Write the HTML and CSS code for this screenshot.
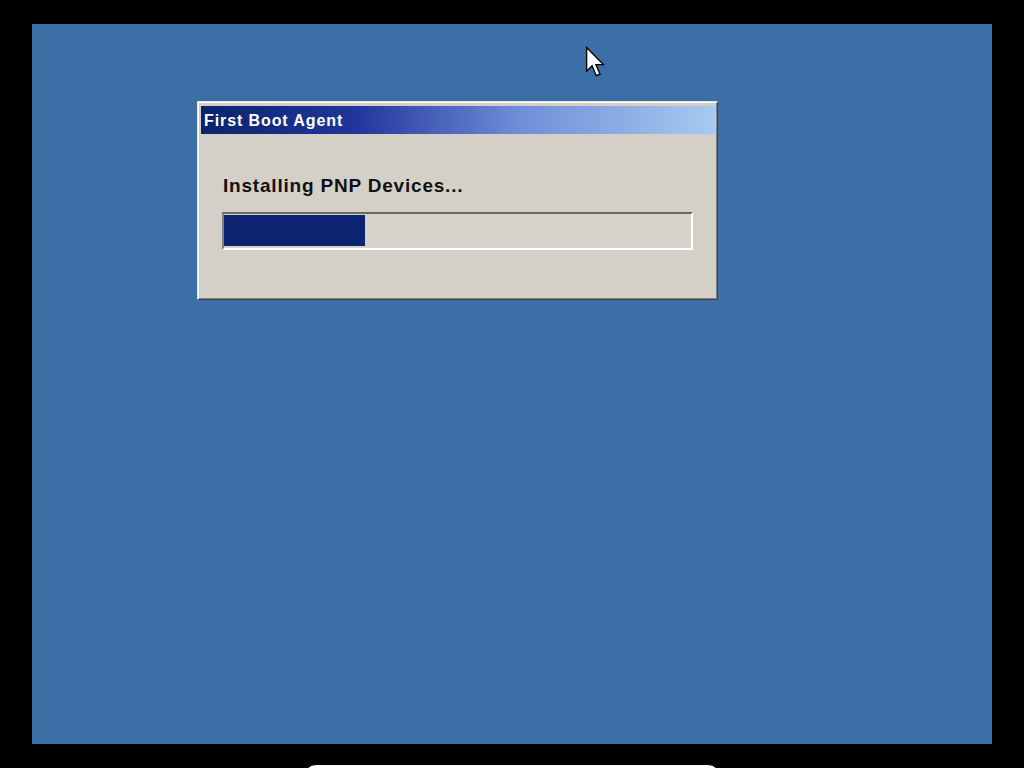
FILE: index.html
```html
<!DOCTYPE html>
<html lang="en">
<head>
  <meta charset="UTF-8">
  <title>First Boot Agent</title>
  <link rel="stylesheet" href="styles.css">
</head>
<body>
  <div class="screen">
    <div class="dialog">
      <div class="title-bar">First Boot Agent</div>
      <div class="dialog-body">
        <p class="status">Installing PNP Devices...</p>
        <div class="progress">
          <div class="progress-fill" style="width: 30.2%"></div>
        </div>
      </div>
    </div>

    <svg class="cursor" width="20" height="32" viewBox="0 0 13 21">
      <path d="M1 1 L1 16.5 L4.6 13 L7.3 19.5 L9.8 18.4 L7.1 12.2 L12 12.2 Z" fill="#fff" stroke="#000" stroke-width="0.9" stroke-linejoin="miter"/>
    </svg>
  </div>
  <div class="monitor-tab"></div>
</body>
</html>
```

FILE: styles.css
```css
/* General */
body {
  margin: 0;
  background-color: #000;
  font-family: 'Liberation Sans', Arial, sans-serif;
  overflow: hidden;
  height: 768px;
}

.screen {
  position: relative;
  width: 960px;
  height: 720px;
  margin: 24px 0 0 32px;
  background-color: #3d6fa7;
  overflow: hidden;
}

/* Dialog window */
.dialog {
  width: 521px;
  height: 199px;
  margin-left: 165px;
  position: relative;
  top: 77px;
  box-sizing: border-box;
  padding: 4px 2px 4px 3px;
  background-color: #d4d0c8;
  border-top: 1px solid #e8e6e0;
  border-left: 1px solid #e8e6e0;
  border-right: 1px solid #404040;
  border-bottom: 1px solid #404040;
  box-shadow: inset 1px 1px 0 #fff, inset -1px -1px 0 #808080;
}

.title-bar {
  height: 28px;
  line-height: 29px;
  padding-left: 3px;
  color: #fff;
  font-weight: bold;
  font-size: 16px;
  letter-spacing: 0.9px;
  background: linear-gradient(to right, #0a246a 0%, #22359c 30%, #6f8ed8 62%, #a6caf0 100%);
}

.dialog-body {
  padding: 0 21px;
}

.status {
  margin: 41px 0 0 1px;
  font-size: 19px;
  font-weight: bold;
  letter-spacing: 0.8px;
  color: #111;
  line-height: 22px;
}

.progress {
  margin-top: 15px;
  width: 471px;
  height: 38px;
  box-sizing: border-box;
  background-color: #d6d3cc;
  border-top: 2px solid #6a6864;
  border-left: 2px solid #808080;
  border-right: 2px solid #fff;
  border-bottom: 2px solid #fff;
}

.progress-fill {
  height: 31px;
  margin-top: 1px;
  background-color: #0c2472;
}

/* Mouse pointer */
.cursor {
  position: absolute;
  left: 553px;
  top: 22px;
}

.monitor-tab {
  width: 416px;
  height: 24px;
  margin: 21px 0 0 304px;
  background-color: #fff;
  border-radius: 12px;
}
```
